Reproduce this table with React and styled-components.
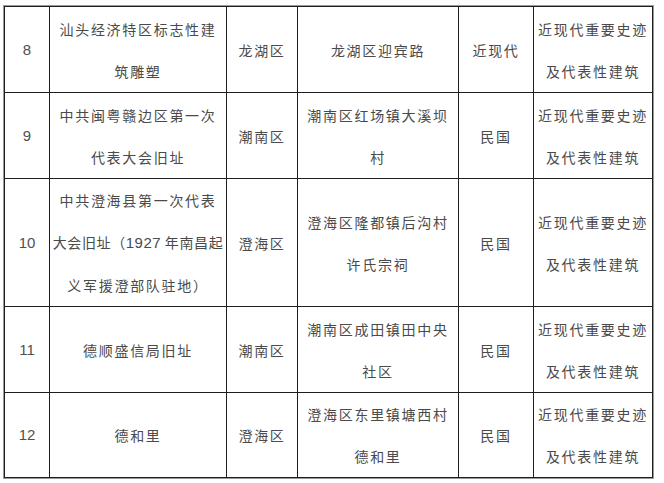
import React from "react";
import styled, { createGlobalStyle } from "styled-components";

const Global = createGlobalStyle`
  html, body { margin: 0; padding: 0; background: #ffffff; }
`;

const Page = styled.div`
  padding: 6px 0 0 4px;
  width: 664px;
  height: 483px;
  box-sizing: border-box;
  overflow: hidden;
  background: #fff;
`;

const Table = styled.table`
  border-collapse: collapse;
  table-layout: fixed;
  width: 648px;
  box-shadow: 0 0 0 1px #9a9a9a;
  font-family: "Noto Sans CJK SC", "Noto Sans", sans-serif;
  color: #4a4a4a;
`;

const Row = styled.tr`
  height: ${(p) => p.$h}px;
`;

const Cell = styled.td`
  border: 1px solid #1e1e1e;
  padding: 0;
  text-align: center;
  vertical-align: middle;
  font-size: 14px;
  line-height: 42px;
  letter-spacing: 1.7px;
  white-space: nowrap;
  overflow: visible;
`;

const NumCell = styled(Cell)`
  font-family: "Liberation Sans", Arial, sans-serif;
  font-size: 15px;
  letter-spacing: 0;
  color: #505050;
`;

const Line = styled.div`
  display: block;
  letter-spacing: ${(p) => (p.$tight ? "0.6px" : "inherit")};
`;

const Num = styled.span`
  font-family: "Liberation Sans", Arial, sans-serif;
  font-size: 15px;
  letter-spacing: 0.5px;
`;

const TYPE = ["近现代重要史迹", "及代表性建筑"];

const rows = [
  {
    no: "8",
    h: 86,
    name: ["汕头经济特区标志性建", "筑雕塑"],
    district: "龙湖区",
    addr: ["龙湖区迎宾路"],
    era: "近现代",
  },
  {
    no: "9",
    h: 86,
    name: ["中共闽粤赣边区第一次", "代表大会旧址"],
    district: "潮南区",
    addr: ["潮南区红场镇大溪坝", "村"],
    era: "民国",
  },
  {
    no: "10",
    h: 127,
    name: [
      "中共澄海县第一次代表",
      <Line key="b" $tight>
        大会旧址（<Num>1927</Num> 年南昌起
      </Line>,
      "义军援澄部队驻地）",
    ],
    district: "澄海区",
    addr: ["澄海区隆都镇后沟村", "许氏宗祠"],
    era: "民国",
  },
  {
    no: "11",
    h: 86,
    name: ["德顺盛信局旧址"],
    district: "潮南区",
    addr: ["潮南区成田镇田中央", "社区"],
    era: "民国",
  },
  {
    no: "12",
    h: 85,
    name: ["德和里"],
    district: "澄海区",
    addr: ["澄海区东里镇塘西村", "德和里"],
    era: "民国",
  },
];

const Lines = ({ items }) =>
  items.map((t, i) =>
    typeof t === "string" ? <Line key={i}>{t}</Line> : t
  );

export default function App() {
  return (
    <>
      <Global />
      <Page>
        <Table>
          <colgroup>
            <col style={{ width: 45 }} />
            <col style={{ width: 177 }} />
            <col style={{ width: 71 }} />
            <col style={{ width: 161 }} />
            <col style={{ width: 75 }} />
            <col style={{ width: 119 }} />
          </colgroup>
          <tbody>
            {rows.map((r) => (
              <Row key={r.no} $h={r.h}>
                <NumCell>{r.no}</NumCell>
                <Cell>
                  <Lines items={r.name} />
                </Cell>
                <Cell>{r.district}</Cell>
                <Cell>
                  <Lines items={r.addr} />
                </Cell>
                <Cell>{r.era}</Cell>
                <Cell>
                  <Lines items={TYPE} />
                </Cell>
              </Row>
            ))}
          </tbody>
        </Table>
      </Page>
    </>
  );
}
